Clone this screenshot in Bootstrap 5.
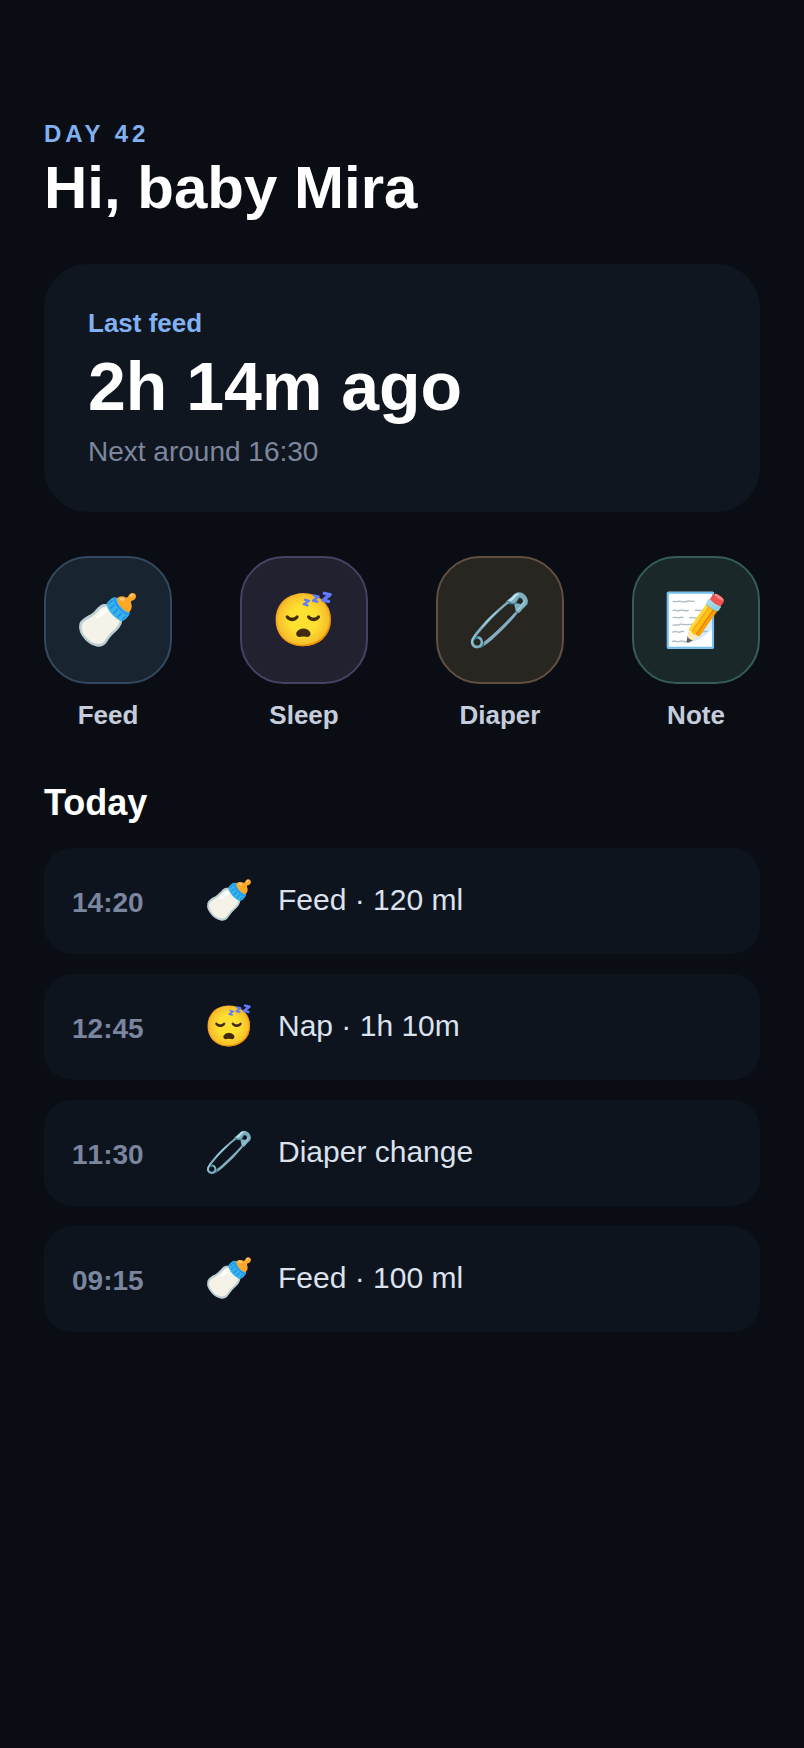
<!DOCTYPE html>
<html lang="en">
<head>
<meta charset="utf-8">
<meta name="viewport" content="width=device-width, initial-scale=1">
<title>Baby log</title>
<link rel="stylesheet" href="https://cdn.jsdelivr.net/npm/bootstrap@5.3.0/dist/css/bootstrap.min.css">
<style>
body{background:#0a0e14;color:#fff;font-family:"Liberation Sans",Arial,"Noto Color Emoji",sans-serif;min-height:100vh}
.page-main{padding:120px 44px 44px}
.eyebrow{font-size:24px;line-height:28px;letter-spacing:4px;color:#82b1f2}
h1{font-size:60px;line-height:72px;margin:4px 0 40px}
.feed-card{background:#0f161f;border-radius:44px;padding:44px;margin-bottom:44px}
.feed-label{font-size:26px;line-height:30px;color:#82b1f2}
.feed-ago{font-size:68px;line-height:80px;margin:8px 0 10px}
.feed-next{font-size:28px;line-height:32px;color:#7c879d}
.quick{width:128px;background:none;border:0;padding:0;color:#c5cddc;font-size:26px;line-height:30px}
.tile{height:128px;border:2px solid;border-radius:44px;font-size:52px;margin-bottom:16px}
.tile-feed{background:#182530;border-color:#33485f}
.tile-sleep{background:#21212f;border-color:#454262}
.tile-diaper{background:#282621;border-color:#615040}
.tile-note{background:#1a2829;border-color:#355c55}
h2{font-size:36px;line-height:42px;margin:52px 0 24px}
.log{gap:20px}
.entry{background:#0d141e;border-radius:28px;min-height:106px;padding:0 28px}
.entry time{width:132px;padding-top:4px;font-size:28px;font-kerning:none;color:#7a859e}
.entry .emo{width:74px;padding-bottom:2px;font-size:40px;line-height:48px}
.entry .what{padding-bottom:2px;font-size:30px;line-height:36px;color:#dbe2ee}
</style>
</head>
<body>
<main class="page-main">
  <header>
    <div class="eyebrow fw-bold">DAY 42</div>
    <h1 class="fw-bold">Hi, baby Mira</h1>
  </header>
  <section class="feed-card">
    <div class="feed-label fw-bold">Last feed</div>
    <div class="feed-ago fw-bold">2h 14m ago</div>
    <div class="feed-next">Next around 16:30</div>
  </section>
  <div class="d-flex justify-content-between">
    <button type="button" class="quick fw-bold"><span class="tile tile-feed d-flex align-items-center justify-content-center">🍼</span>Feed</button>
    <button type="button" class="quick fw-bold"><span class="tile tile-sleep d-flex align-items-center justify-content-center">😴</span>Sleep</button>
    <button type="button" class="quick fw-bold"><span class="tile tile-diaper d-flex align-items-center justify-content-center">🧷</span>Diaper</button>
    <button type="button" class="quick fw-bold"><span class="tile tile-note d-flex align-items-center justify-content-center">📝</span>Note</button>
  </div>
  <h2 class="fw-bold">Today</h2>
  <ul class="log list-unstyled d-flex flex-column mb-0">
    <li class="entry d-flex align-items-center"><time class="fw-bold">14:20</time><span class="emo">🍼</span><span class="what">Feed · 120 ml</span></li>
    <li class="entry d-flex align-items-center"><time class="fw-bold">12:45</time><span class="emo">😴</span><span class="what">Nap · 1h 10m</span></li>
    <li class="entry d-flex align-items-center"><time class="fw-bold">11:30</time><span class="emo">🧷</span><span class="what">Diaper change</span></li>
    <li class="entry d-flex align-items-center"><time class="fw-bold">09:15</time><span class="emo">🍼</span><span class="what">Feed · 100 ml</span></li>
  </ul>
</main>
<script src="https://cdn.jsdelivr.net/npm/bootstrap@5.3.0/dist/js/bootstrap.bundle.min.js"></script>
</body>
</html>
